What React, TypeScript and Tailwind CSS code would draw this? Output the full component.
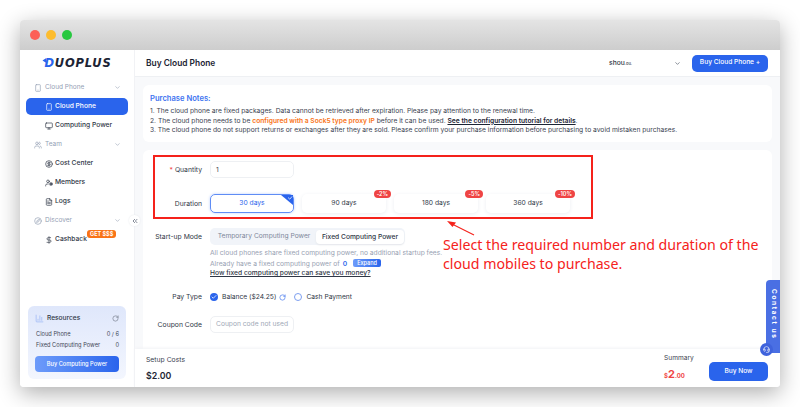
import React from 'react';
import { ChevronDown, Smartphone, Monitor, Users, CircleDollarSign, UserCog, FileText, Compass, DollarSign, RotateCw, ChevronsLeft, Check, Headset, BarChart3 } from 'lucide-react';

const NavGroup: React.FC<{ icon: React.ReactNode; label: string; mt: string }> = ({ icon, label, mt }) => (
  <div className={`flex items-center h-[19px] pl-[14px] pr-[13px] text-[6.5px] text-[#94a0b4] ${mt}`}>
    <span className="w-[11px]">{icon}</span>
    <span className="flex-1">{label}</span>
    <ChevronDown className="w-[7px] h-[7px]" />
  </div>
);

const NavItem: React.FC<{ icon: React.ReactNode; label: string; active?: boolean; children?: React.ReactNode }> = ({ icon, label, active, children }) => (
  <div className={`relative flex items-center h-[17px] mx-[6px] my-[1px] pl-[17px] rounded-[5px] text-[6.7px] font-medium ${active ? 'bg-[#2a64ec] text-white' : 'text-[#2f3746]'}`}>
    <span className="w-[11px] mr-[1px] flex justify-center">{icon}</span>
    <span>{label}</span>
    {children}
  </div>
);

const Row: React.FC<{ label: string; mark?: boolean; className?: string; children: React.ReactNode }> = ({ label, mark, className, children }) => (
  <div className={`flex ${className ?? ''}`}>
    <div className="w-[59px] shrink-0 text-right text-[6.8px] text-[#2f3746] leading-[18px]">
      {mark && <span className="text-[#ef4444] mr-[2px]">*</span>}
      {label}
    </div>
    <div className="ml-[8px]">{children}</div>
  </div>
);

const DurationTile: React.FC<{ label: string; off?: string; active?: boolean }> = ({ label, off, active }) => (
  <div className={`relative w-[84px] h-[19px] rounded-[5px] flex items-center justify-center text-[6.7px] ${active ? 'border border-[#5f8df5] text-[#2a64ec] shadow-[0_0_3px_#bcd0fb]' : 'bg-white text-[#2f3746] shadow-[0_1px_4px_#eceef2]'}`}>
    {label}
    {active && (
      <svg className="absolute top-0 right-0" width="12" height="10" viewBox="0 0 12 10">
        <path d="M0 0H12V10Z" fill="#2a64ec" />
        <path d="M7 2.5L8.8 4.2L11 1.5" stroke="#fff" strokeWidth="0.7" fill="none" />
      </svg>
    )}
    {off && (
      <span className="absolute -top-[4px] right-[-5px] h-[8px] px-[3px] rounded-full bg-[#ef4444] text-white text-[5.5px] font-semibold leading-[8px]">{off}</span>
    )}
  </div>
);

export default function App() {
  return (
    <div className="w-[800px] h-[407px] bg-white p-[20px] overflow-hidden" style={{ fontFamily: 'Inter, "Liberation Sans", sans-serif' }}>
      <div className="relative w-[760px] h-[367px] rounded-[4px] overflow-hidden flex flex-col bg-white shadow-[0_6px_22px_rgba(0,0,0,0.32)]">
        {/* Title bar */}
        <div className="h-[30px] shrink-0 flex items-center gap-[6px] pl-[10px] bg-gradient-to-b from-[#e4e4e4] to-[#cdcdcd]">
          <span className="w-[10px] h-[10px] rounded-full bg-[#fc5f57]" />
          <span className="w-[10px] h-[10px] rounded-full bg-[#fdbc2e]" />
          <span className="w-[10px] h-[10px] rounded-full bg-[#28c840]" />
        </div>

        <div className="flex-1 flex min-h-0">
          {/* Sidebar */}
          <aside className="relative w-[115px] shrink-0 flex flex-col bg-white border-r border-[#f1f2f5]">
            <div className="relative h-[27px] flex items-center justify-center pl-[2px] text-[11.5px] font-bold italic tracking-[0.8px] text-[#1c2434]" style={{ fontFamily: '"DejaVu Sans", sans-serif' }}>
              <span className="text-[#2a64ec]">D</span>UOPLUS
              <svg className="absolute left-[22px] top-[8px]" width="6" height="6" viewBox="0 0 6 6">
                <path d="M0.5 2.5L4 0.3V4.7Z" fill="#2a64ec" />
              </svg>
            </div>
            <NavGroup mt="mt-[1px]" label="Cloud Phone" icon={<Smartphone className="w-[8px] h-[8px]" />} />
            <NavItem active label="Cloud Phone" icon={<Smartphone className="w-[8px] h-[8px]" />} />
            <NavItem label="Computing Power" icon={<Monitor className="w-[8px] h-[8px]" />} />
            <NavGroup mt="" label="Team" icon={<Users className="w-[8px] h-[8px]" />} />
            <NavItem label="Cost Center" icon={<CircleDollarSign className="w-[8px] h-[8px]" />} />
            <NavItem label="Members" icon={<UserCog className="w-[8px] h-[8px]" />} />
            <NavItem label="Logs" icon={<FileText className="w-[8px] h-[8px]" />} />
            <NavGroup mt="" label="Discover" icon={<Compass className="w-[8px] h-[8px]" />} />
            <NavItem label="Cashback" icon={<DollarSign className="w-[8px] h-[8px]" />}>
              <span className="absolute left-[61px] -top-[1px] h-[8px] px-[3px] rounded-[3px] bg-[#f97316] text-white text-[5.5px] font-bold leading-[8px] whitespace-nowrap">GET $$$</span>
            </NavItem>

            <div className="mt-auto mb-[8px] mx-[8px] h-[73px] rounded-[6px] bg-gradient-to-b from-[#dfe7fb] to-[#f3f6fe] px-[7px] pt-[7px]">
              <div className="flex items-center h-[11px] text-[6.6px] font-medium text-[#2f3746]">
                <BarChart3 className="w-[9px] h-[9px] text-[#9db8f5] mr-[3px]" />
                <span className="flex-1">Resources</span>
                <RotateCw className="w-[7px] h-[7px] text-[#6b7280]" />
              </div>
              <div className="flex justify-between mt-[6px] pl-[1px] text-[5.7px] text-[#3f4756] leading-[8px]">
                <span>Cloud Phone</span><span>0 / 6</span>
              </div>
              <div className="flex justify-between mt-[3px] pl-[1px] text-[5.7px] text-[#3f4756] leading-[8px]">
                <span>Fixed Computing Power</span><span>0</span>
              </div>
              <div className="mt-[7px] h-[16px] rounded-[4px] bg-gradient-to-r from-[#6d9bfa] to-[#2a64ec] flex items-center justify-center text-[5.7px] font-medium text-white">
                Buy Computing Power
              </div>
            </div>

            <div className="absolute right-[-6px] top-[165px] w-[11px] h-[11px] rounded-full bg-white flex items-center justify-center text-[#475063] shadow-[0_0_2px_#e5e7eb]">
              <ChevronsLeft className="w-[8px] h-[8px]" />
            </div>
          </aside>

          {/* Main */}
          <main className="flex-1 min-w-0 flex flex-col bg-[#f8f9fb]">
            <header className="h-[27px] shrink-0 flex items-center bg-white border-b border-[#eef0f3] pl-[11px] pr-[12px]">
              <h1 className="text-[8.4px] font-semibold text-[#1c2434]">Buy Cloud Phone</h1>
              <span className="ml-auto text-[6.7px] font-medium text-[#2f3746]">shou<span className="text-[4px]">.ou.</span></span>
              <ChevronDown className="w-[7px] h-[7px] ml-[42px] text-[#374151]" />
              <button className="ml-[11px] w-[76px] h-[17px] rounded-[5px] bg-[#2a64ec] text-white text-[6.6px] font-medium">Buy Cloud Phone +</button>
            </header>

            <div className="flex-1 min-h-0 overflow-hidden px-[8px] pt-[8px] flex flex-col gap-[8px]">
              <section className="h-[57px] shrink-0 rounded-[6px] bg-white pl-[7px] pt-[8px]">
                <div className="text-[7.6px] font-semibold text-[#3d73f0] leading-[11px]">Purchase Notes:</div>
                <div className="mt-[3px] text-[6.7px] leading-[9.6px] text-[#3a4250] whitespace-nowrap">
                  <p>1. The cloud phone are fixed packages. Data cannot be retrieved after expiration. Please pay attention to the renewal time.</p>
                  <p>2. The cloud phone needs to be <span className="font-semibold text-[#f97316]">configured with a Sock5 type proxy IP</span> before it can be used. <span className="font-semibold text-[#1c2434] underline">See the configuration tutorial for details</span>.</p>
                  <p>3. The cloud phone do not support returns or exchanges after they are sold. Please confirm your purchase information before purchasing to avoid mistaken purchases.</p>
                </div>
              </section>

              <section className="flex-1 rounded-t-[6px] bg-white pt-[11px]">
                <Row label="Quantity" mark>
                  <div className="w-[84px] h-[17px] rounded-[5px] border border-[#eef0f3] pl-[5px] text-[6.7px] leading-[17px] text-[#3a4250]">1</div>
                </Row>
                <Row label="Duration" className="mt-[15px] items-center">
                  <div className="flex gap-[8px]">
                    <DurationTile label="30 days" active />
                    <DurationTile label="90 days" off="-2%" />
                    <DurationTile label="180 days" off="-5%" />
                    <DurationTile label="360 days" off="-10%" />
                  </div>
                </Row>
                <Row label="Start-up Mode" className="mt-[15px]">
                  <div className="w-[195px] h-[17px] rounded-[5px] bg-[#f1f4f9] flex items-center pl-[2px] pr-[1px] text-[6.7px] text-[#7d8799] whitespace-nowrap">
                    <span className="flex-1 text-center">Temporary Computing Power</span>
                    <span className="w-[88px] h-[14px] rounded-[4px] bg-white text-center leading-[14px] font-medium text-[#2f3746] shadow-[0_1px_2px_#e5e7eb]">Fixed Computing Power</span>
                  </div>
                  <div className="mt-[4px] text-[6.7px] leading-[9.7px] text-[#98a1b2] whitespace-nowrap">
                    <p>All cloud phones share fixed computing power, no additional startup fees.</p>
                    <p>Already have a fixed computing power of <span className="font-semibold text-[#2a64ec] mx-[1px]">0</span> <span className="inline-block ml-[3px] w-[28px] h-[8px] rounded-[2px] bg-gradient-to-r from-[#6d9bfa] to-[#2a64ec] text-white text-[5.5px] font-medium text-center leading-[8px] align-[1px]">Expand</span></p>
                    <p className="font-medium text-[#2f3746] underline">How fixed computing power can save you money?</p>
                  </div>
                </Row>
                <Row label="Pay Type" className="mt-[9px]">
                  <div className="h-[18px] flex items-center text-[6.7px] text-[#2f3746]">
                    <span className="w-[8px] h-[8px] rounded-full bg-[#2a64ec] flex items-center justify-center"><Check className="w-[6px] h-[6px] text-white" strokeWidth={3} /></span>
                    <span className="ml-[4px]">Balance ($24.25)</span>
                    <RotateCw className="w-[7px] h-[7px] ml-[3px] text-[#2a64ec]" />
                    <span className="ml-[8px] w-[8px] h-[8px] rounded-full border border-[#7d9ff0]" />
                    <span className="ml-[4px]">Cash Payment</span>
                  </div>
                </Row>
                <Row label="Coupon Code" className="mt-[10px]">
                  <div className="w-[84px] h-[17px] rounded-[5px] border border-[#eef0f3] text-center text-[6.7px] leading-[15px] text-[#a0a8b6]">Coupon code not used</div>
                </Row>
              </section>
            </div>

            <footer className="relative h-[38px] shrink-0 bg-white flex items-start justify-between pl-[11px] pr-[12px] shadow-[0_-1px_3px_#f1f2f5]">
              <div className="pt-[6px]">
                <div className="text-[6.8px] leading-[10px] text-[#3a4250]">Setup Costs</div>
                <div className="mt-[5px] text-[8.8px] leading-[12px] font-semibold text-[#1c2434]">$2.00</div>
              </div>
              <div className="flex">
                <div className="pt-[4px] w-[45px]">
                  <div className="text-[6.6px] leading-[10px] text-[#3a4250]">Summary</div>
                  <div className="mt-[5px] leading-[12px] font-bold text-[#ef4444] text-[6px]">$<span className="text-[11px]">2</span>.00</div>
                </div>
                <button className="mt-[13px] w-[59px] h-[19px] rounded-[5px] bg-[#2a64ec] text-white text-[6.6px] font-medium">Buy Now</button>
              </div>
            </footer>
          </main>
        </div>

        {/* Contact tab */}
        <div className="absolute right-0 top-[260px] w-[14px] h-[73px] rounded-l-[4px] bg-[#4a6fe3] flex justify-center pt-[9px]">
          <span className="text-[6.5px] font-bold text-white tracking-[1.6px] [writing-mode:vertical-rl] whitespace-nowrap">Contact us</span>
        </div>
        <div className="absolute left-[740px] top-[323px] w-[13px] h-[13px] rounded-full bg-[#3f63dc] flex items-center justify-center">
          <Headset className="w-[7px] h-[7px] text-white" />
        </div>

        {/* Annotation over the form */}
        <div className="absolute left-[133px] top-[135px] w-[440px] h-[64px] border-2 border-[#f5221b]" />
        <svg className="absolute left-[420px] top-[195px]" width="45" height="25" viewBox="0 0 45 25">
          <path d="M34 20L10 8" stroke="#f5221b" strokeWidth="1.2" fill="none" />
          <path d="M7 6L16 7.5L12.5 12Z" fill="#f5221b" />
        </svg>
        <div className="absolute left-[423px] top-[215px] text-[14.2px] leading-[19px] text-[#f5221b] whitespace-nowrap" style={{ fontFamily: '"Noto Sans", sans-serif' }}>
          Select the required number and duration of the<br />cloud mobiles to purchase.
        </div>
      </div>
    </div>
  );
}
